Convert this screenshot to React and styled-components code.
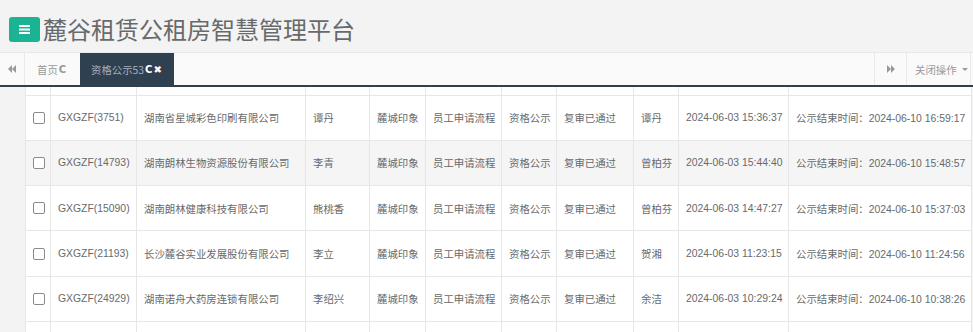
import React from 'react'
import styled, { createGlobalStyle } from 'styled-components'

const Global = createGlobalStyle`
  html, body { margin: 0; padding: 0; }
  body {
    background: #f3f3f4;
    font-family: "Liberation Sans", Arial, "Noto Sans CJK SC", sans-serif;
    color: #676a6c;
    overflow: hidden;
  }
`

const Page = styled.div`
  width: 973px;
  height: 332px;
  display: flex;
  flex-direction: column;
  overflow: hidden;
`

const Header = styled.header`
  height: 52px;
  flex-shrink: 0;
  display: flex;
  align-items: center;
  padding-left: 9px;
  gap: 3px;
  box-sizing: border-box;
  padding-top: 6px;
`

const MenuButton = styled.button`
  width: 31px;
  height: 25px;
  border: none;
  border-radius: 3px;
  background: #1ab394;
  display: flex;
  align-items: center;
  justify-content: center;
  padding: 0;
`

const Title = styled.h1`
  margin: 0;
  font-size: 24px;
  font-weight: normal;
  color: #676a6c;
  font-family: "Noto Sans CJK SC", sans-serif;
  line-height: 1;
`

const TabBar = styled.nav`
  height: 32px;
  flex-shrink: 0;
  display: flex;
  background: #fafafa;
  border-top: 1px solid #e7eaec;
  border-bottom: 2px solid #2f4050;
`

const NavArrow = styled.div`
  width: ${p => (p.wide ? '31px' : '24px')};
  display: flex;
  align-items: center;
  justify-content: center;
  border-${p => p.side}: 1px solid #e7eaec;
`

const Tabs = styled.div`
  flex: 1;
  display: flex;
`

const Tab = styled.div`
  display: flex;
  align-items: center;
  padding: 0 ${p => (p.active ? '11px' : '12px')};
  min-width: ${p => (p.active ? '94px' : '55px')};
  box-sizing: border-box;
  font-size: 10.4px;
  font-family: "Noto Sans CJK SC", sans-serif;
  color: ${p => (p.active ? '#a7b1c2' : '#999')};
  background: ${p => (p.active ? '#2f4050' : 'transparent')};
  gap: 1px;
`

const TabIcon = styled.span`
  font-family: "DejaVu Sans", sans-serif;
  font-weight: bold;
  font-size: 10px;
  color: ${p => (p.active ? '#fff' : '#999')};
`

const CloseMenu = styled.div`
  width: 65px;
  margin-right: 2px;
  display: flex;
  align-items: center;
  gap: 5px;
  padding-left: 8px;
  box-sizing: border-box;
  font-size: 10.4px;
  font-family: "Noto Sans CJK SC", sans-serif;
  color: #999;
  border-left: 1px solid #e7eaec;
  border-right: 1px solid #e7eaec;
`

const Caret = styled.span`
  width: 0;
  height: 0;
  border-left: 3px solid transparent;
  border-right: 3px solid transparent;
  border-top: 3px solid #999;
`

const Content = styled.main`
  flex: 1;
  padding-left: 25px;
  padding-right: 2px;
  overflow: hidden;
`

const Table = styled.table`
  width: 946px;
  border-collapse: collapse;
  background: #fff;
  table-layout: fixed;
  font-size: 10.4px;
`

const Row = styled.tr`
  background: ${p => (p.striped ? '#f5f5f5' : '#fff')};
`

const Cell = styled.td`
  border: 1px solid #e7e7e7;
  border-top: ${p => (p.partial ? 'none' : '1px solid #e7e7e7')};
  height: ${p => (p.partial ? '8px' : '45.3px')};
  padding: 0 7px;
  white-space: nowrap;
  overflow: hidden;
  font-family: "Liberation Sans", Arial, "Noto Sans CJK SC", sans-serif;
  color: #676a6c;
  vertical-align: middle;
  box-sizing: border-box;
`

const Check = styled.span`
  display: block;
  width: 10px;
  height: 10px;
  border: 1px solid #8a8a8a;
  border-radius: 2px;
  background: #fff;
`

const cols = [25, 86, 169, 64, 56, 76, 55, 77, 45, 110, 183]

const rows = [
  ['GXGZF(3751)', '湖南省星城彩色印刷有限公司', '谭丹', '谭丹', '2024-06-03 15:36:37', '2024-06-10 16:59:17'],
  ['GXGZF(14793)', '湖南朗林生物资源股份有限公司', '李青', '曾柏芬', '2024-06-03 15:44:40', '2024-06-10 15:48:57'],
  ['GXGZF(15090)', '湖南朗林健康科技有限公司', '熊桃香', '曾柏芬', '2024-06-03 14:47:27', '2024-06-10 15:37:03'],
  ['GXGZF(21193)', '长沙麓谷实业发展股份有限公司', '李立', '贺湘', '2024-06-03 11:23:15', '2024-06-10 11:24:56'],
  ['GXGZF(24929)', '湖南诺舟大药房连锁有限公司', '李绍兴', '余洁', '2024-06-03 10:29:24', '2024-06-10 10:38:26'],
]

const Hamburger = () => (
  <svg width="11" height="9" viewBox="0 0 11 9">
    <rect x="0" y="0" width="11" height="2" fill="#fff" />
    <rect x="0" y="3.5" width="11" height="2" fill="#fff" />
    <rect x="0" y="7" width="11" height="2" fill="#fff" />
  </svg>
)

const Backward = ({ flip }) => (
  <svg width="8" height="8" viewBox="0 0 8 8" style={flip ? { transform: 'scaleX(-1)' } : undefined}>
    <path d="M4 0 L0 4 L4 8 Z M8 0 L4 4 L8 8 Z" fill="#999" />
  </svg>
)

export default function App() {
  return (
    <Page>
      <Global />
      <Header>
        <MenuButton><Hamburger /></MenuButton>
        <Title>麓谷租赁公租房智慧管理平台</Title>
      </Header>
      <TabBar>
        <NavArrow side="right"><Backward /></NavArrow>
        <Tabs>
          <Tab>首页<TabIcon>C</TabIcon></Tab>
          <Tab active>资格公示53<TabIcon active>C</TabIcon><TabIcon active>✖</TabIcon></Tab>
        </Tabs>
        <NavArrow side="left" wide><Backward flip /></NavArrow>
        <CloseMenu>关闭操作<Caret /></CloseMenu>
      </TabBar>
      <Content>
        <Table>
          <colgroup>
            {cols.map((w, i) => <col key={i} style={{ width: w }} />)}
          </colgroup>
          <tbody>
            <Row>
              {cols.map((_, i) => <Cell key={i} partial />)}
            </Row>
            {rows.map((r, i) => (
              <Row key={r[0]} striped={i === 1}>
                <Cell><Check /></Cell>
                <Cell>{r[0]}</Cell>
                <Cell>{r[1]}</Cell>
                <Cell>{r[2]}</Cell>
                <Cell>麓城印象</Cell>
                <Cell>员工申请流程</Cell>
                <Cell>资格公示</Cell>
                <Cell>复审已通过</Cell>
                <Cell>{r[3]}</Cell>
                <Cell>{r[4]}</Cell>
                <Cell>公示结束时间：{r[5]}</Cell>
              </Row>
            ))}
            <Row>
              {cols.map((_, i) => <Cell key={i} />)}
            </Row>
          </tbody>
        </Table>
      </Content>
    </Page>
  )
}
